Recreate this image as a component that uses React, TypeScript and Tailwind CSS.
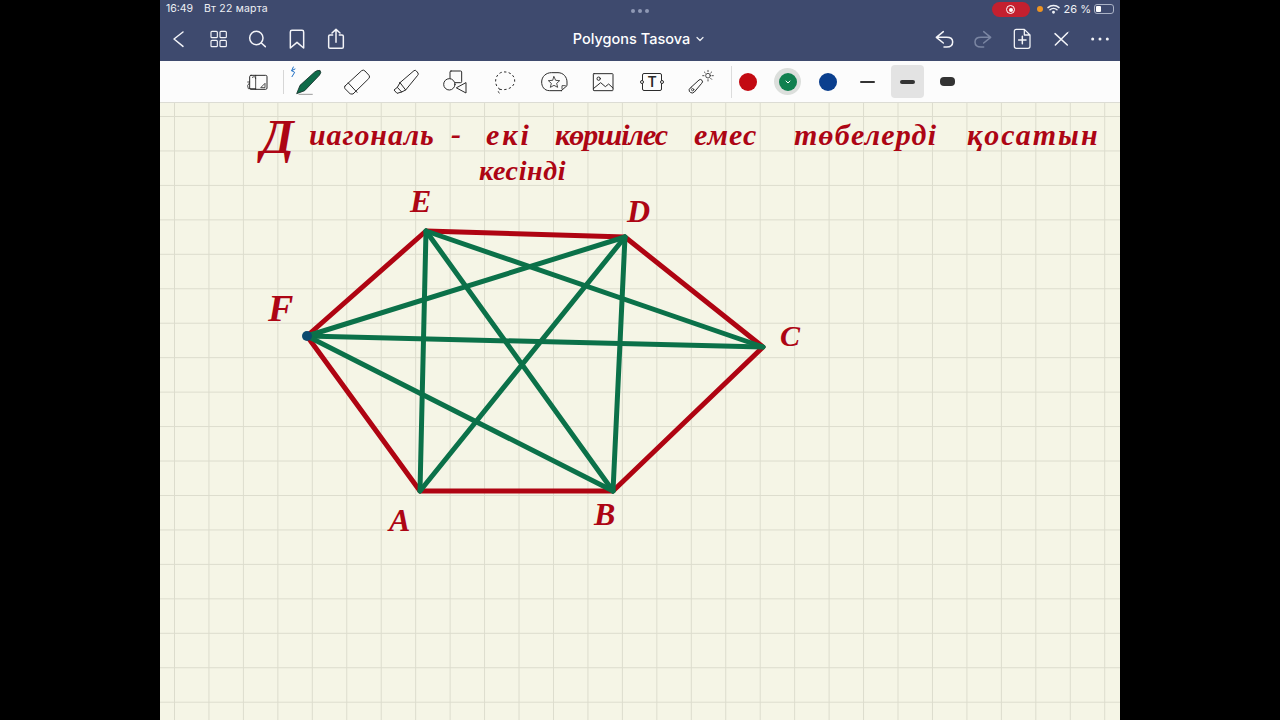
import React from "react";

type IconProps = { cx: number; cy: number; size?: number; children: React.ReactNode };

// Drawn in a 3x coordinate space, centred on (cx, cy)
function Icon({ cx, cy, size = 32, children }: IconProps) {
  const u = size * 3;
  return (
    <svg
      width={size}
      height={size}
      viewBox={`${cx - u / 2} ${cy - u / 2} ${u} ${u}`}
      fill="none"
      strokeLinecap="round"
      strokeLinejoin="round"
      className="shrink-0"
    >
      {children}
    </svg>
  );
}

const NAV = { stroke: "#f3f4f8", strokeWidth: 4.5 };
const TOOL = { stroke: "#2b2b2b", strokeWidth: 3 };

function NavSlot({ children, w = "w-[39.3px]" }: { children: React.ReactNode; w?: string }) {
  return <div className={`${w} h-full flex items-center justify-center shrink-0`}>{children}</div>;
}

function ToolSlot({ children }: { children: React.ReactNode }) {
  return <div className="w-[49.2px] h-full flex items-center justify-center shrink-0">{children}</div>;
}

function ColorSlot({ children, active }: { children: React.ReactNode; active?: boolean }) {
  return (
    <div className="w-10 h-full flex items-center justify-center shrink-0">
      <div className={`w-[33px] h-[33px] rounded-[4px] flex items-center justify-center ${active ? "bg-[#e3e3e3]" : ""}`}>
        {children}
      </div>
    </div>
  );
}

type Word = { t: string; cls: string };
const words: Word[] = [
  { t: "Д", cls: "left-[101px] top-[10px] text-[48px]" },
  { t: "иагональ", cls: "left-[149px] top-[17px] text-[30px] tracking-[0.9px]" },
  { t: "-", cls: "left-[291px] top-[16px] text-[30px]" },
  { t: "екі", cls: "left-[326px] top-[17px] text-[30px] tracking-[3px]" },
  { t: "көршілес", cls: "left-[395px] top-[17px] text-[30px] tracking-[-1px]" },
  { t: "емес", cls: "left-[534px] top-[17px] text-[30px] tracking-[1px]" },
  { t: "төбелерді", cls: "left-[634px] top-[17px] text-[30px] tracking-[1.2px]" },
  { t: "қосатын", cls: "left-[807px] top-[17px] text-[30px] tracking-[2px]" },
  { t: "кесінді", cls: "left-[319px] top-[54px] text-[28px] tracking-[0.6px]" },
  { t: "E", cls: "left-[250px] top-[82px] text-[32px]" },
  { t: "D", cls: "left-[467px] top-[92px] text-[32px]" },
  { t: "F", cls: "left-[108px] top-[186px] text-[38px]" },
  { t: "C", cls: "left-[620px] top-[218px] text-[30px]" },
  { t: "A", cls: "left-[229px] top-[401px] text-[32px]" },
  { t: "B", cls: "left-[434px] top-[395px] text-[32px]" },
];

const RED = "#af0412";
const GREEN = "#0b7149";

export default function App() {
  return (
    <div className="w-[1280px] h-[720px] bg-black flex justify-center overflow-hidden font-['Inter',sans-serif]">
      <div className="w-[960px] h-full flex flex-col">
        {/* Status bar */}
        <div className="h-[18px] bg-[#3e4a6e] flex items-center text-[#eef0f5] text-[10.5px] pl-[6px] pr-[6px] relative shrink-0">
          <span className="w-[38px]">16:49</span>
          <span className="tracking-[0.2px]">Вт 22 марта</span>
          <div className="absolute left-1/2 top-[9px] -translate-x-1/2 flex gap-[3px]">
            <span className="w-[4px] h-[4px] rounded-full bg-[#8f99b5]" />
            <span className="w-[4px] h-[4px] rounded-full bg-[#8f99b5]" />
            <span className="w-[4px] h-[4px] rounded-full bg-[#8f99b5]" />
          </div>
          <div className="flex-1" />
          <div className="w-[38px] h-[15px] mt-[1px] rounded-full bg-[#c4202f] flex items-center justify-center">
            <span className="w-[9px] h-[9px] rounded-full border border-white flex items-center justify-center">
              <span className="w-[4px] h-[4px] rounded-full bg-white" />
            </span>
          </div>
          <span className="w-[6px] h-[6px] rounded-full bg-[#ee9422] ml-[7px]" />
          <svg width="13" height="10" viewBox="0 0 13 10" fill="none" stroke="#eef0f5" strokeWidth="1.5" strokeLinecap="round" className="ml-[4px]">
            <path d="M1 3.6 C4 0.8 9 0.8 12 3.6" />
            <path d="M3 5.8 C5 4 8 4 10 5.8" />
            <circle cx="6.5" cy="8.2" r="0.7" fill="#eef0f5" />
          </svg>
          <span className="ml-[4px] text-[11px]">26 %</span>
          <div className="ml-[3px] w-[20px] h-[10px] rounded-[3px] border border-[#aab2c6] p-[1px]">
            <div className="w-[5px] h-full rounded-[1px] bg-white" />
          </div>
        </div>

        {/* Nav bar */}
        <div className="h-[43px] bg-[#3e4a6e] flex items-center relative shrink-0 pb-[2px]">
          <div className="flex-1 h-full flex items-center -ml-[1px]">
            <NavSlot>
              <Icon cx={58} cy={118}>
                <path d="M70 97 L43 118 L70 140" {...NAV} />
              </Icon>
            </NavSlot>
            <NavSlot>
              <Icon cx={174} cy={117}>
                <rect x="153" y="94" width="19" height="19" rx="3" {...NAV} strokeWidth={3.5} />
                <rect x="180" y="94" width="19" height="19" rx="3" {...NAV} strokeWidth={3.5} />
                <rect x="153" y="121" width="19" height="19" rx="3" {...NAV} strokeWidth={3.5} />
                <rect x="180" y="121" width="19" height="19" rx="3" {...NAV} strokeWidth={3.5} />
              </Icon>
            </NavSlot>
            <NavSlot>
              <Icon cx={292} cy={118}>
                <circle cx="290" cy="115" r="20" {...NAV} />
                <path d="M305 130 L317 141" {...NAV} />
              </Icon>
            </NavSlot>
            <NavSlot>
              <Icon cx={411} cy={118}>
                <path d="M391 97 Q391 92 396 92 H426 Q431 92 431 97 V145 L411 128 L391 145 Z" {...NAV} />
              </Icon>
            </NavSlot>
            <NavSlot>
              <Icon cx={528} cy={118}>
                <path d="M518 106 H510 Q506 106 506 110 V142 Q506 146 510 146 H546 Q550 146 550 142 V110 Q550 106 546 106 H538" {...NAV} />
                <path d="M528 128 V89 M516 100 L528 89 L540 100" {...NAV} />
              </Icon>
            </NavSlot>
          </div>
          <div className="shrink-0 flex items-center gap-[6px] text-white text-[14.5px] font-medium pr-[1px]">
            <span>Polygons Tasova</span>
            <svg width="8" height="6" viewBox="0 0 8 6" fill="none" stroke="#eef0f5" strokeWidth="1.2" strokeLinecap="round" strokeLinejoin="round">
              <path d="M1 1.5 L4 4.5 L7 1.5" />
            </svg>
          </div>
          <div className="flex-1 h-full flex items-center justify-end pr-[1px]">
            <NavSlot w="w-[39px]">
              <Icon cx={912} cy={118}>
                <path d="M910 96 L889 113 L910 130 M889 113 H920 Q938 113 938 127 Q938 142 920 142 H912" {...NAV} />
              </Icon>
            </NavSlot>
            <NavSlot w="w-[39px]">
              <Icon cx={1030} cy={118}>
                <path d="M1032 96 L1053 113 L1032 130 M1053 113 H1024 Q1006 113 1006 127 Q1006 142 1024 142 H1032" {...NAV} stroke="#7b86a3" />
              </Icon>
            </NavSlot>
            <NavSlot w="w-[39px]">
              <Icon cx={1148} cy={117}>
                <path d="M1131 88 H1155 L1172 105 V139 Q1172 145 1166 145 H1131 Q1125 145 1125 139 V94 Q1125 88 1131 88 Z M1155 88 V105 H1172" {...NAV} strokeWidth={3.8} />
                <path d="M1149 109 V131 M1138 120 H1160" {...NAV} />
              </Icon>
            </NavSlot>
            <NavSlot w="w-[39px]">
              <Icon cx={1264} cy={118}>
                <path d="M1246 102 L1283 136 M1283 100 L1247 136" {...NAV} />
                <path d="M1279 104 L1286 97" {...NAV} strokeWidth={3} />
              </Icon>
            </NavSlot>
            <NavSlot w="w-[39px]">
              <Icon cx={1383} cy={118}>
                <circle cx="1361" cy="118" r="4.5" fill="#f3f4f8" />
                <circle cx="1383" cy="118" r="4.5" fill="#f3f4f8" />
                <circle cx="1405" cy="118" r="4.5" fill="#f3f4f8" />
              </Icon>
            </NavSlot>
          </div>
        </div>

        {/* Tool bar */}
        <div className="h-[42px] bg-[#fcfcfc] border-b border-[#dcdcd4] flex items-center pl-[74px] shrink-0">
          <ToolSlot>
            <Icon cx={300} cy={246}>
              <rect x="272" y="226" width="52" height="42" rx="4" {...TOOL} />
              <path d="M290 226 V268 M280 232 Q290 226 290 236 M272 246 H266 M306 262 L318 250 V262 Z" {...TOOL} strokeWidth={2.5} />
              <path d="M270 250 Q262 256 268 266 H290" {...TOOL} strokeWidth={2.5} />
            </Icon>
          </ToolSlot>
          <div className="w-px h-[24px] bg-[#d6d6d6] mr-[-1px]" />
          <ToolSlot>
            <Icon cx={442} cy={246} size={36}>
              <path d="M398 201 L393 212 L402 217 L394 230 M393 212 L403 207" stroke="#1f6fc4" strokeWidth={3} />
              <path d="M478 212 Q484 216 476 226 L432 272 L408 281 L418 256 L462 216 Q472 208 478 212 Z" fill="#0f6b4a" stroke="#17302a" strokeWidth={2.5} />
              <path d="M415 283 H455" stroke="#9a9a9a" strokeWidth={3} />
            </Icon>
          </ToolSlot>
          <ToolSlot>
            <Icon cx={592} cy={246}>
              <path d="M556 258 L606 212 Q611 208 616 213 L628 226 Q632 231 627 236 L580 282 L572 282 L556 266 Q553 262 556 258 Z" {...TOOL} />
              <path d="M566 249 L592 277" {...TOOL} />
            </Icon>
          </ToolSlot>
          <ToolSlot>
            <Icon cx={740} cy={246}>
              <path d="M722 248 L764 212 Q768 209 771 213 L776 219 Q778 223 775 226 L739 270 L722 248 Z" {...TOOL} />
              <path d="M722 248 L714 262 L727 276 L739 270 M714 262 L704 270 L713 280 L727 276" {...TOOL} />
            </Icon>
          </ToolSlot>
          <ToolSlot>
            <Icon cx={885} cy={248}>
              <rect x="870" y="215" width="35" height="35" rx="3" {...TOOL} />
              <circle cx="868" cy="255" r="17" fill="#fcfcfc" {...TOOL} />
              <path d="M918 251 V281 L890 266 Z" {...TOOL} />
            </Icon>
          </ToolSlot>
          <ToolSlot>
            <Icon cx={1033} cy={246}>
              <path d="M1018 268 C1000 258 1000 228 1020 218 C1040 210 1064 224 1062 244 C1060 264 1036 272 1018 268 C1010 272 1012 278 1018 280" {...TOOL} strokeLinecap="butt" strokeDasharray="7 7" />
            </Icon>
          </ToolSlot>
          <ToolSlot>
            <Icon cx={1178} cy={247}>
              <path d="M1200 273 H1165 C1148 273 1141 260 1141 247 C1141 230 1155 219 1170 219 H1190 C1206 219 1217 232 1217 247 V258 L1200 273 Z" {...TOOL} />
              <path d="M1178 231 L1183 242 L1195 243 L1186 251 L1189 263 L1178 257 L1167 263 L1170 251 L1161 243 L1173 242 Z" {...TOOL} strokeWidth={2.5} />
              <path d="M1202 268 V258 H1212" {...TOOL} strokeWidth={2.5} />
            </Icon>
          </ToolSlot>
          <ToolSlot>
            <Icon cx={1325} cy={248}>
              <rect x="1296" y="223" width="59" height="51" rx="2" {...TOOL} />
              <circle cx="1312" cy="238" r="5" {...TOOL} />
              <path d="M1296 268 L1318 250 L1332 262 L1342 254 L1355 266" {...TOOL} />
            </Icon>
          </ToolSlot>
          <ToolSlot>
            <div className="relative w-[20px] h-[18px] border border-[#2b2b2b] rounded-[2px] flex items-center justify-center text-[14px] leading-none font-semibold text-[#2b2b2b]">
              T
              <span className="absolute left-[-3px] top-[6px] w-[4px] h-[4px] rounded-full bg-white border border-[#2b2b2b]" />
              <span className="absolute right-[-3px] top-[6px] w-[4px] h-[4px] rounded-full bg-white border border-[#2b2b2b]" />
            </div>
          </ToolSlot>
          <ToolSlot>
            <Icon cx={1622} cy={246} size={36}>
              <path d="M1592 262 L1616 240 Q1620 236 1625 241 Q1629 246 1624 250 L1602 276 Q1596 282 1590 277 L1587 274 Q1583 268 1592 262 Z" {...TOOL} />
              <circle cx="1597" cy="269" r="3.5" {...TOOL} strokeWidth={2.5} />
              <circle cx="1643" cy="227" r="7" {...TOOL} strokeWidth={2.5} />
              <path d="M1643 211 V215 M1643 239 V243 M1627 227 H1631 M1655 227 H1659 M1632 216 L1635 219 M1654 216 L1651 219 M1654 238 L1651 235" {...TOOL} strokeWidth={2.5} />
            </Icon>
          </ToolSlot>
          <div className="w-px h-[32px] bg-[#dcdcdc] ml-[5px] mr-[-4px]" />
          <ColorSlot>
            <span className="w-[18px] h-[18px] rounded-full bg-[#c30a12]" />
          </ColorSlot>
          <ColorSlot>
            <span className="w-[27px] h-[27px] rounded-full bg-[#dcdfdc] flex items-center justify-center">
              <span className="w-[18px] h-[18px] rounded-full bg-[#10804f] flex items-center justify-center">
                <svg width="6" height="4" viewBox="0 0 6 4" fill="none" stroke="#ffffff" strokeWidth="1" strokeLinecap="round" strokeLinejoin="round">
                  <path d="M1 1 L3 3 L5 1" />
                </svg>
              </span>
            </span>
          </ColorSlot>
          <ColorSlot>
            <span className="w-[18px] h-[18px] rounded-full bg-[#0b3f8e]" />
          </ColorSlot>
          <ColorSlot>
            <span className="w-[15px] h-[2px] rounded-full bg-[#333333]" />
          </ColorSlot>
          <ColorSlot active>
            <span className="w-[15px] h-[4px] rounded-full bg-[#333333]" />
          </ColorSlot>
          <ColorSlot>
            <span className="w-[15px] h-[9px] rounded-[4px] bg-[#333333]" />
          </ColorSlot>
        </div>

        {/* Canvas */}
        <div className="flex-1 relative overflow-hidden bg-[#f5f5e6] bg-[linear-gradient(#dcdccd_1px,transparent_1px),linear-gradient(90deg,#dcdccd_1px,transparent_1px)] bg-[size:34.46px_34.46px] bg-[position:14px_13px]">
          <svg className="absolute inset-0" width="960" height="617" viewBox="160 103 960 617" fill="none" strokeLinecap="round">
            <g stroke={RED} strokeWidth="5">
              <path d="M426 231 L625 237 L763 347 L613 491 L420 491 L307 336 Z" strokeLinejoin="round" />
            </g>
            <g stroke={GREEN} strokeWidth="5">
              <path d="M426 231 L420 491" />
              <path d="M426 231 L613 491" />
              <path d="M426 231 L763 347" />
              <path d="M625 237 L420 491" />
              <path d="M625 237 L613 491" />
              <path d="M625 237 L307 336" />
              <path d="M307 336 L763 347" />
              <path d="M307 336 L613 491" />
            </g>
            <circle cx="307" cy="336" r="5" fill="#0c4a6e" />
          </svg>
          {words.map((w) => (
            <span
              key={w.t}
              className={`absolute leading-none font-bold italic text-[#ad0514] font-['Liberation_Serif',serif] ${w.cls}`}
            >
              {w.t}
            </span>
          ))}
        </div>
      </div>
    </div>
  );
}
